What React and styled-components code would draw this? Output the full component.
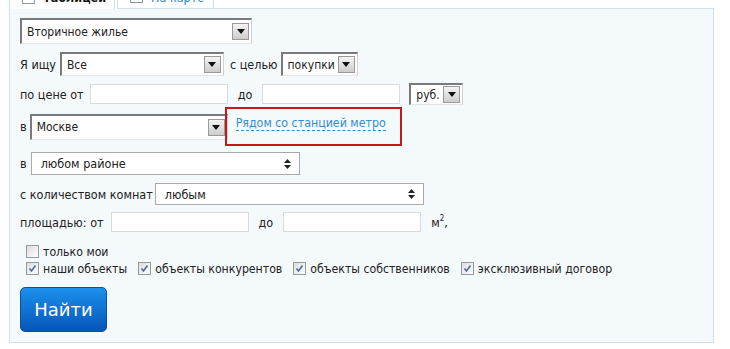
import { createGlobalStyle, styled } from "styled-components";

const GlobalStyle = createGlobalStyle`
  html, body {
    margin: 0;
    padding: 0;
    background: #ffffff;
    overflow: hidden;
  }
  body {
    font-family: "DejaVu Sans Condensed", "DejaVu Sans", Verdana, sans-serif;
    font-size: 12px;
    color: #222222;
  }
`;

function Checkbox({ checked }) {
  return (
    <SCBox>
      {checked && (
        <svg width="9" height="9" viewBox="0 0 9 9">
          <path
            d="M1.5 4.5 L3.5 7 L7.5 1.5"
            fill="none"
            stroke="#4a6c9b"
            strokeWidth="1.6"
          />
        </svg>
      )}
    </SCBox>
  );
}

function OldSelect({ width, value }) {
  return (
    <SCOldSelect $width={width}>
      <SCSelectText>{value}</SCSelectText>
      <SCDropButton>
        <svg width="8" height="5" viewBox="0 0 8 5">
          <path d="M0 0 L8 0 L4 5 Z" fill="#111" />
        </svg>
      </SCDropButton>
    </SCOldSelect>
  );
}

function NewSelect({ width, value }) {
  return (
    <SCNewSelect $width={width}>
      <span>{value}</span>
      <svg width="7" height="10" viewBox="0 0 7 10">
        <path d="M0 4 L7 4 L3.5 0 Z M0 6 L7 6 L3.5 10 Z" fill="#222" />
      </svg>
    </SCNewSelect>
  );
}

export default function App() {
  return (
    <SCPage>
      <GlobalStyle />
      <SCTabs>
        <SCTab $active $w={106}>
          <SCTabIcon />
          Таблицей
        </SCTab>
        <SCTab $w={97}>
          <SCTabIcon />
          На карте
        </SCTab>
        <SCTabRest />
      </SCTabs>

      <SCPanel>
        <SCRow $h={26} $mt={9}>
          <OldSelect width={232} value="Вторичное жилье" />
        </SCRow>

        <SCRow $h={24} $mt={8}>
          <SCLabel $mr={4}>Я ищу</SCLabel>
          <OldSelect width={164} value="Все" />
          <SCLabel $ml={6} $mr={3}>с целью</SCLabel>
          <OldSelect width={77} value="покупки" />
        </SCRow>

        <SCRow $h={22} $mt={7}>
          <SCLabel $mr={6}>по цене от</SCLabel>
          <SCInput $width={138} />
          <SCLabel $ml={10} $mr={10}>до</SCLabel>
          <SCInput $width={138} />
          <SCSpacer $w={9} />
          <OldSelect width={54} value="руб." />
        </SCRow>

        <SCRow $h={39} $mt={2}>
          <SCLabel $mr={3}>в</SCLabel>
          <OldSelect width={198} value="Москве" />
          <SCMetroBox>
            <SCMetroLink href="#">Рядом со станцией метро</SCMetroLink>
          </SCMetroBox>
        </SCRow>

        <SCRow $h={23} $mt={6}>
          <SCLabel $mr={4}>в</SCLabel>
          <NewSelect width={269} value="любом районе" />
        </SCRow>

        <SCRow $h={22} $mt={8}>
          <SCLabel $mr={2}>с количеством комнат</SCLabel>
          <NewSelect width={269} value="любым" />
        </SCRow>

        <SCRow $h={20} $mt={7}>
          <SCLabel $mr={7}>площадью: от</SCLabel>
          <SCInput $width={138} />
          <SCLabel $ml={10} $mr={10}>до</SCLabel>
          <SCInput $width={138} />
          <SCLabel $ml={10}>
            м<sup>2</sup>,
          </SCLabel>
        </SCRow>

        <SCChecks $mt={11}>
          <SCCheck>
            <Checkbox />
            только мои
          </SCCheck>
        </SCChecks>

        <SCChecks>
          <SCCheck>
            <Checkbox checked />
            наши объекты
          </SCCheck>
          <SCCheck>
            <Checkbox checked />
            объекты конкурентов
          </SCCheck>
          <SCCheck>
            <Checkbox checked />
            объекты собственников
          </SCCheck>
          <SCCheck>
            <Checkbox checked />
            эксклюзивный договор
          </SCCheck>
        </SCChecks>

        <SCButton>Найти</SCButton>
      </SCPanel>
    </SCPage>
  );
}

const SCPage = styled.div`
  width: 730px;
  height: 370px;
  margin-top: -21px;
`;

const SCTabs = styled.div`
  display: flex;
  height: 30px;
  padding-left: 9px;
  width: 705px;
`;

const SCTab = styled.div`
  display: flex;
  align-items: center;
  gap: 8px;
  box-sizing: border-box;
  height: 30px;
  padding: 6px 0 0 12px;
  width: ${(p) => p.$w}px;
  flex-shrink: 0;
  white-space: nowrap;
  background: #ffffff;
  border: 1px solid #cfe0ea;
  border-bottom: ${(p) => (p.$active ? "none" : "1px solid #cfe0ea")};
  margin-left: ${(p) => (p.$active ? "0" : "2px")};
  font-weight: ${(p) => (p.$active ? "bold" : "normal")};
  color: ${(p) => (p.$active ? "#111" : "#2f86c9")};
  font-size: 12.5px;
`;

const SCTabIcon = styled.span`
  width: 11px;
  height: 10px;
  border: 1px solid #8a9aa6;
  background: #fff;
  flex-shrink: 0;
`;

const SCTabRest = styled.div`
  flex: 1;
  border-bottom: 1px solid #cfe0ea;
`;

const SCPanel = styled.div`
  box-sizing: border-box;
  margin-left: 9px;
  width: 705px;
  height: 334px;
  background: #f4f9fc;
  border: 1px solid #cfe0ea;
  border-top: none;
  padding: 0 10px;
  display: flex;
  flex-direction: column;
`;

const SCRow = styled.div`
  display: flex;
  align-items: center;
  height: ${(p) => p.$h}px;
  margin-top: ${(p) => p.$mt || 0}px;
  flex-shrink: 0;
`;

const SCLabel = styled.span`
  margin-left: ${(p) => p.$ml || 0}px;
  margin-right: ${(p) => p.$mr || 0}px;
  white-space: nowrap;
  font-size: 12.5px;

  sup {
    font-size: 8px;
    vertical-align: 6px;
    line-height: 0;
  }
`;

const SCSpacer = styled.span`
  width: ${(p) => p.$w}px;
`;

const SCOldSelect = styled.div`
  box-sizing: border-box;
  width: ${(p) => p.$width}px;
  height: 100%;
  max-height: 26px;
  display: flex;
  align-items: center;
  justify-content: space-between;
  background: #ffffff;
  border-top: 2px solid #7a7a7a;
  border-left: 2px solid #7a7a7a;
  border-right: 1px solid #d0d0d0;
  border-bottom: 1px solid #e4e4e4;
  padding: 0 2px 0 5px;
  white-space: nowrap;
  font-size: 12px;
`;

const SCSelectText = styled.span`
  margin-right: 2px;
`;

const SCDropButton = styled.span`
  box-sizing: border-box;
  width: 17px;
  height: 17px;
  display: flex;
  align-items: center;
  justify-content: center;
  background: linear-gradient(#f4f4f4, #cdcdcd);
  border: 1px solid #9a9a9a;
  flex-shrink: 0;
`;

const SCNewSelect = styled.div`
  box-sizing: border-box;
  width: ${(p) => p.$width}px;
  height: 100%;
  display: flex;
  align-items: center;
  justify-content: space-between;
  background: #ffffff;
  border: 1px solid #a9a9a9;
  padding: 0 8px 0 9px;
  font-size: 12.5px;
`;

const SCInput = styled.div`
  box-sizing: border-box;
  width: ${(p) => p.$width}px;
  height: 20px;
  background: #ffffff;
  border: 1px solid #d6dbde;
`;

const SCMetroBox = styled.div`
  box-sizing: border-box;
  margin-left: -3px;
  width: 177px;
  height: 39px;
  border: 2px solid #c8161d;
  padding: 7px 0 0 9px;
`;

const SCMetroLink = styled.a`
  color: #3a8ccd;
  text-decoration: none;
  border-bottom: 1px dashed #3a8ccd;
  white-space: nowrap;
  font-size: 12.3px;
`;

const SCChecks = styled.div`
  display: flex;
  align-items: center;
  height: 17px;
  margin-top: ${(p) => p.$mt || 0}px;
  padding-left: 6px;
  gap: 11px;
  flex-shrink: 0;
`;

const SCCheck = styled.label`
  display: flex;
  align-items: center;
  gap: 4px;
  white-space: nowrap;
  font-size: 12.2px;
`;

const SCBox = styled.span`
  box-sizing: border-box;
  width: 13px;
  height: 13px;
  border: 1px solid #8f9ba6;
  background: linear-gradient(135deg, #dcdcdc, #ffffff);
  display: flex;
  align-items: center;
  justify-content: center;
  flex-shrink: 0;
`;

const SCButton = styled.button`
  margin-top: 10px;
  width: 87px;
  height: 45px;
  border: 1px solid #0b4ea3;
  border-radius: 5px;
  background: linear-gradient(#1c8fec, #0656b9);
  color: #ffffff;
  font-family: "DejaVu Sans", Verdana, sans-serif;
  font-size: 18px;
  padding: 0;
  flex-shrink: 0;
`;
